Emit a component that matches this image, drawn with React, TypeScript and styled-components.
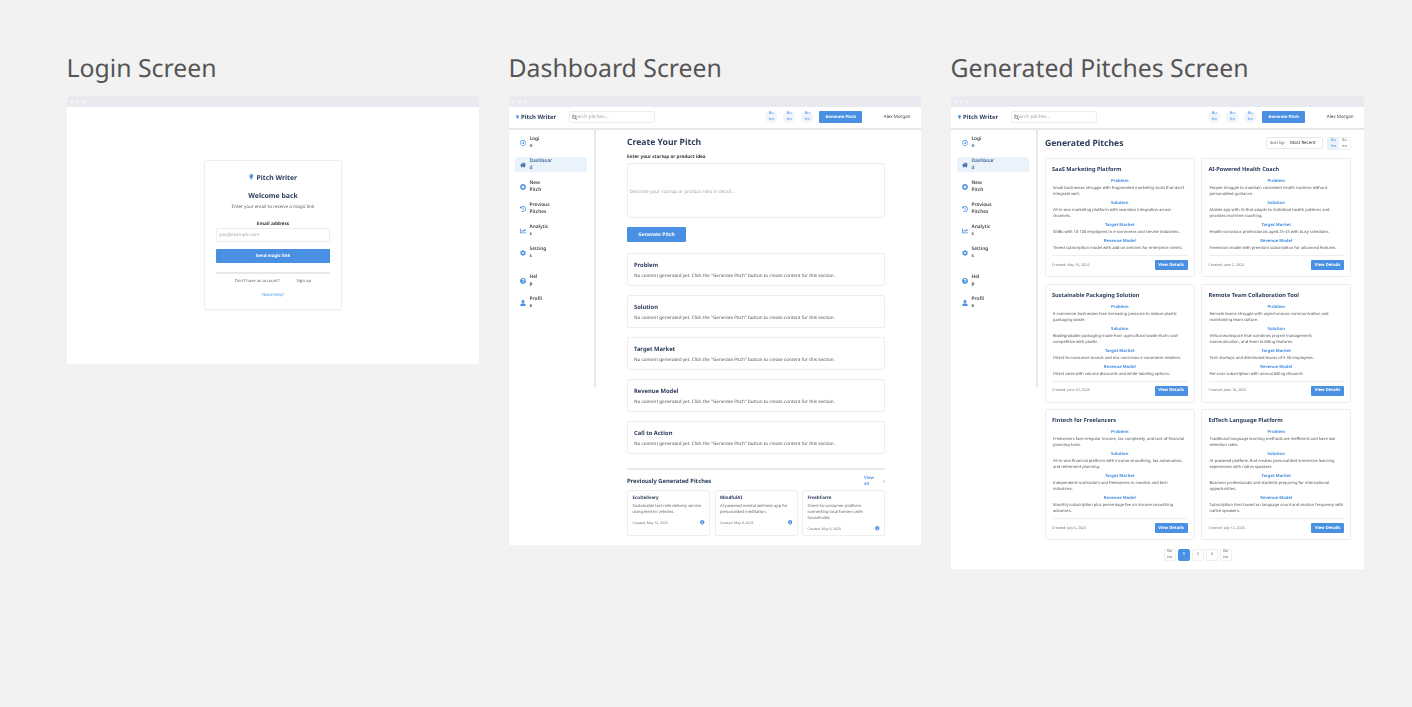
import React from "react";
import styled, { createGlobalStyle } from "styled-components";
import {
  FaChartLine,
  FaChevronRight,
  FaCog,
  FaHistory,
  FaHome,
  FaInfoCircle,
  FaLightbulb,
  FaPlusCircle,
  FaQuestionCircle,
  FaRegArrowAltCircleRight,
  FaSearch,
  FaUser,
} from "react-icons/fa";

const BLUE = "#4a90e2";
const NAVY = "#2c3e5c";

const GlobalStyle = createGlobalStyle`
  html, body {
    margin: 0;
    background: #f2f2f3;
    font-family: "Noto Sans", "Open Sans", sans-serif;
    text-rendering: geometricPrecision;
  }
  * { box-sizing: border-box; }
`;

const Page = styled.div`
  display: grid;
  grid-template-columns: 412px 412px 413px;
  column-gap: 30px;
  align-items: start;
  padding: 52px 0 0 67px;
  width: 1412px;
  height: 707px;
  overflow: hidden;
`;

const ScreenTitle = styled.h2`
  margin: 0 0 12px -0.5px;
  font-size: 24.8px;
  line-height: 32px;
  font-weight: 400;
  color: #555;
`;

const Frame = styled.div`
  background: #fff;
  border-radius: 3px 3px 0 0;
  overflow: hidden;
  filter: blur(0.25px);
`;

const FrameBar = styled.div`
  display: flex;
  align-items: center;
  gap: 3px;
  height: 11px;
  padding-left: 3px;
  background: #e9eaf0;
`;

const FrameDot = styled.span`
  width: 3px;
  height: 3px;
  border-radius: 50%;
  background: #f4f5f8;
`;

const LoginArea = styled.div`
  display: flex;
  align-items: center;
  justify-content: center;
  height: 257px;
  padding-bottom: 1px;
`;

const LoginCard = styled.div`
  display: flex;
  flex-direction: column;
  align-items: center;
  width: 138px;
  height: 150px;
  padding: 11px 11px 0;
  border: 1px solid #eeeeee;
  border-radius: 2px;
  box-shadow: 0 1px 2px rgba(0, 0, 0, 0.03);
`;

const LoginLogo = styled.div`
  display: flex;
  align-items: center;
  gap: 3px;
  height: 10px;
  font-size: 6.8px;
  font-weight: 700;
  color: ${NAVY};
  svg { width: 4.5px; height: 5.5px; color: ${BLUE}; }
`;

const Welcome = styled.h3`
  margin: 10px 0 0;
  font-size: 6.9px;
  line-height: 10px;
  font-weight: 700;
  color: ${NAVY};
`;

const Subtitle = styled.p`
  margin: 1px 0 0;
  font-size: 4.5px;
  line-height: 8px;
  color: #666;
`;

const EmailLabel = styled.label`
  margin-top: 10px;
  font-size: 4.7px;
  line-height: 6px;
  font-weight: 700;
  color: #333;
`;

const EmailInput = styled.div`
  display: flex;
  align-items: center;
  width: 100%;
  height: 14px;
  margin-top: 1px;
  padding-left: 2px;
  border: 1px solid #eeeeee;
  border-radius: 2px;
  font-size: 4.55px;
  color: #a4a8ae;
`;

const WideButton = styled.div`
  display: flex;
  align-items: center;
  justify-content: center;
  width: 100%;
  height: 14px;
  margin-top: 7px;
  background: ${BLUE};
  border-radius: 1px;
  font-size: 4.4px;
  font-weight: 700;
  color: #fff;
`;

const LoginRule = styled.div`
  width: 100%;
  height: 2px;
  margin-top: 9px;
  background: #e7e7e7;
`;

const SignupRow = styled.div`
  display: flex;
  justify-content: center;
  gap: 17px;
  margin-top: 5px;
  font-size: 4.1px;
  line-height: 6px;
  color: #666;
`;

const HelpLink = styled.a`
  margin-top: 8px;
  font-size: 4.2px;
  line-height: 6px;
  color: ${BLUE};
`;

const TopBar = styled.div`
  display: flex;
  align-items: center;
  height: 23px;
  padding: 0 10.5px 1px 7px;
  border-bottom: 2px solid #e7e7e7;
`;

const Brand = styled.div`
  display: flex;
  align-items: center;
  gap: 2px;
  width: 53px;
  font-size: 5.9px;
  font-weight: 700;
  color: ${NAVY};
  white-space: nowrap;
  svg { width: 3px; height: 4px; color: ${BLUE}; flex: none; }
`;

const SearchBox = styled.div`
  position: relative;
  display: flex;
  align-items: center;
  width: 86px;
  height: 11.5px;
  padding-left: 2px;
  border: 1px solid #eeeeee;
  border-radius: 2px;
  font-size: 4.8px;
  color: #9a9ea4;
`;

const SearchGlyph = styled(FaSearch)`
  position: absolute;
  left: 1.5px;
  top: 2.5px;
  width: 5px;
  height: 5px;
  color: #8f959c;
`;

const TopActions = styled.div`
  display: flex;
  align-items: center;
  gap: 6px;
  margin-left: auto;
`;

const RoundButton = styled.div`
  width: 12px;
  height: 12px;
  border-radius: 50%;
  background: #edf4fc;
  font-size: 3.9px;
  line-height: 6px;
  text-align: center;
  color: ${BLUE};
  white-space: pre-line;
`;

const HeaderCta = styled.div`
  display: flex;
  align-items: center;
  justify-content: center;
  width: 43px;
  height: 11.5px;
  background: ${BLUE};
  border-radius: 1px;
  font-size: 4.1px;
  font-weight: 700;
  color: #fff;
`;

const UserName = styled.span`
  margin-left: 21.5px;
  font-size: 4.5px;
  color: #444;
`;

const Body = styled.div`
  display: flex;
  align-items: flex-start;
`;

const Sidebar = styled.nav`
  flex: none;
  display: flex;
  flex-direction: column;
  width: 87px;
  height: 257px;
  padding: 5px 7px 0 6px;
  border-right: 2px solid #e7e7e7;
`;

const NavItem = styled.div<{ $active?: boolean; $gapTop?: number }>`
  display: flex;
  align-items: center;
  gap: 4px;
  height: 15px;
  margin-top: ${(p) => p.$gapTop ?? 7}px;
  padding-left: 4.5px;
  border-radius: 2px;
  background: ${(p) => (p.$active ? "#eaf3fc" : "transparent")};
  font-size: 4.8px;
  line-height: 7px;
  font-weight: 600;
  color: ${(p) => (p.$active ? "#3f6596" : "#3d4149")};
  white-space: pre-line;
  svg {
    width: 6px;
    height: 6px;
    color: ${(p) => (p.$active ? "#2f5f9e" : BLUE)};
    flex: none;
  }
`;

const DashboardMain = styled.main`
  flex: 1;
  min-width: 0;
  padding: 6px 36px 8.5px 31px;
`;

const MainTitle = styled.h1`
  margin: 0;
  font-size: 8.6px;
  line-height: 12px;
  font-weight: 700;
  color: ${NAVY};
`;

const FieldLabel = styled.div`
  margin-top: 6px;
  font-size: 4.6px;
  line-height: 6px;
  font-weight: 700;
  color: #333;
`;

const IdeaBox = styled.div`
  display: flex;
  align-items: center;
  height: 55px;
  margin-top: 3px;
  padding: 3px 0 0 1.5px;
  border: 1px solid #eeeeee;
  border-radius: 2px;
  font-size: 4.7px;
  color: #a4a8ae;
`;

const GenerateButton = styled.div`
  display: flex;
  align-items: center;
  justify-content: center;
  width: 59px;
  height: 15px;
  margin-top: 9px;
  background: ${BLUE};
  border-radius: 1px;
  font-size: 4.95px;
  font-weight: 700;
  color: #fff;
`;

const SectionList = styled.div`
  display: flex;
  flex-direction: column;
  gap: 9px;
  margin-top: 11px;
`;

const SectionCard = styled.section`
  height: 33px;
  padding: 7px 6px 0;
  border: 1px solid #eeeeee;
  border-radius: 2px;
`;

const SectionTitle = styled.h4`
  margin: 0;
  font-size: 5.8px;
  line-height: 8px;
  font-weight: 700;
  color: ${NAVY};
`;

const SectionEmpty = styled.p`
  margin: 4px 0 0;
  font-size: 4.6px;
  line-height: 6px;
  color: #555;
`;

const Rule = styled.div`
  height: 2px;
  margin-top: 14px;
  background: #e7e7e7;
`;

const PreviousHead = styled.div`
  display: flex;
  align-items: center;
  height: 12px;
  margin-top: 5px;
`;

const PreviousTitle = styled.h3`
  margin: 0;
  font-size: 5.8px;
  font-weight: 700;
  color: ${NAVY};
`;

const ViewAll = styled.a`
  margin-left: auto;
  width: 18.5px;
  font-size: 4.4px;
  line-height: 6px;
  font-weight: 600;
  color: ${BLUE};
  white-space: pre-line;
`;

const ViewAllChevron = styled(FaChevronRight)`
  width: 2.5px;
  height: 3px;
  color: #777;
`;

const MiniGrid = styled.div`
  display: grid;
  grid-template-columns: repeat(3, 1fr);
  gap: 4.5px;
  margin-top: 3px;
`;

const MiniCard = styled.article`
  padding: 4px 4.5px 3.5px;
  border: 1px solid #eeeeee;
  border-radius: 2px;
`;

const MiniTitle = styled.h5`
  margin: 0;
  font-size: 4.5px;
  line-height: 6px;
  font-weight: 700;
  color: ${NAVY};
`;

const MiniText = styled.p`
  margin: 2.7px 0 0;
  font-size: 4px;
  line-height: 6px;
  color: #666;
`;

const MiniFooter = styled.div`
  display: flex;
  align-items: center;
  justify-content: space-between;
  height: 6px;
  margin-top: 4px;
  font-size: 3.4px;
  color: #777;
  svg { width: 4.5px; height: 4.5px; color: ${BLUE}; }
`;

const PitchesMain = styled.main`
  flex: 1;
  min-width: 0;
  padding: 6px 13px 8px 6.5px;
`;

const PitchesHead = styled.div`
  display: flex;
  align-items: center;
  height: 14px;
  padding-left: 0.5px;
`;

const SortBox = styled.div`
  display: flex;
  align-items: center;
  width: 57px;
  height: 12px;
  margin-left: auto;
  padding-left: 3px;
  border: 1px solid #e8e8e8;
  border-radius: 2px;
  font-size: 4.2px;
  color: #555;
  white-space: nowrap;
  overflow: hidden;
`;

const SortValue = styled.span`
  margin-left: 5px;
  font-size: 4.4px;
  color: #333;
`;

const ViewToggle = styled.div`
  display: flex;
  width: 24px;
  height: 13px;
  margin-left: 4px;
  border: 1px solid #eeeeee;
  border-radius: 2px;
`;

const ToggleCell = styled.div<{ $on?: boolean }>`
  flex: 1;
  background: ${(p) => (p.$on ? "#eaf3fc" : "#fff")};
  font-size: 3.9px;
  line-height: 6px;
  text-align: center;
  color: ${(p) => (p.$on ? BLUE : "#777")};
  white-space: pre-line;
`;

const PitchGrid = styled.div`
  display: grid;
  grid-template-columns: repeat(2, 150px);
  justify-content: space-between;
  row-gap: 6.5px;
  margin-top: 8px;
`;

const PitchCard = styled.article`
  display: flex;
  flex-direction: column;
  padding: 5px 6px 6px 6.5px;
  border: 1px solid #eeeeee;
  border-radius: 2px;
`;

const PitchTitle = styled.h3`
  margin: 0 0 5px;
  font-size: 5.6px;
  line-height: 10px;
  font-weight: 700;
  color: ${NAVY};
`;

const BlockLabel = styled.div`
  font-size: 4.2px;
  line-height: 6px;
  font-weight: 700;
  text-align: center;
  color: ${BLUE};
`;

const BlockText = styled.p`
  margin: 1px 0 3px;
  padding: 0 0.7px 0 1px;
  font-size: 4px;
  line-height: 6px;
  color: #555;
`;

const PitchFooter = styled.div`
  display: flex;
  align-items: center;
  justify-content: space-between;
  padding-top: 4px;
  border-top: 1.5px solid #eeeeee;
  font-size: 3.6px;
  color: #777;
`;

const DetailsButton = styled.div`
  display: flex;
  align-items: center;
  justify-content: center;
  width: 33px;
  height: 10px;
  background: ${BLUE};
  border-radius: 1px;
  font-size: 4.2px;
  font-weight: 700;
  color: #fff;
`;

const Pager = styled.div`
  display: flex;
  justify-content: center;
  gap: 2px;
  margin-top: 8.5px;
`;

const PageCell = styled.div<{ $on?: boolean }>`
  display: flex;
  align-items: center;
  justify-content: center;
  width: 12px;
  height: 12px;
  border: 1px solid ${(p) => (p.$on ? BLUE : "#eeeeee")};
  border-radius: 2px;
  background: ${(p) => (p.$on ? BLUE : "#fff")};
  font-size: 3.9px;
  line-height: 6px;
  font-weight: ${(p) => (p.$on ? 700 : 400)};
  text-align: center;
  color: ${(p) => (p.$on ? "#fff" : "#666")};
  white-space: pre-line;
`;

const navItems = [
  { label: "Logi\nn", icon: <FaRegArrowAltCircleRight />, top: 0 },
  { label: "Dashboar\nd", icon: <FaHome />, active: true },
  { label: "New\nPitch", icon: <FaPlusCircle /> },
  { label: "Previous\nPitches", icon: <FaHistory /> },
  { label: "Analytic\ns", icon: <FaChartLine /> },
  { label: "Setting\ns", icon: <FaCog /> },
  { label: "Hel\np", icon: <FaQuestionCircle />, top: 13.5 },
  { label: "Profil\ne", icon: <FaUser /> },
];

const sections = ["Problem", "Solution", "Target Market", "Revenue Model", "Call to Action"];

const recent = [
  { name: "EcoDelivery", text: "Sustainable last-mile delivery service using electric vehicles.", date: "Created: May 12, 2025" },
  { name: "MindfulAI", text: "AI-powered mental wellness app for personalized meditation.", date: "Created: May 8, 2025" },
  { name: "FreshFarm", text: "Direct-to-consumer platform connecting local farmers with households.", date: "Created: May 5, 2025" },
];

const pitches = [
  {
    title: "SaaS Marketing Platform",
    date: "Created: May 15, 2025",
    blocks: [
      "Small businesses struggle with fragmented marketing tools that don't integrate well.",
      "All-in-one marketing platform with seamless integration across channels.",
      "SMBs with 10-100 employees in e-commerce and service industries.",
      "Tiered subscription model with add-on services for enterprise clients.",
    ],
  },
  {
    title: "AI-Powered Health Coach",
    date: "Created: June 2, 2025",
    blocks: [
      "People struggle to maintain consistent health routines without personalized guidance.",
      "Mobile app with AI that adapts to individual health patterns and provides real-time coaching.",
      "Health-conscious professionals aged 25-45 with busy schedules.",
      "Freemium model with premium subscription for advanced features.",
    ],
  },
  {
    title: "Sustainable Packaging Solution",
    date: "Created: June 10, 2025",
    blocks: [
      "E-commerce businesses face increasing pressure to reduce plastic packaging waste.",
      "Biodegradable packaging made from agricultural waste that's cost-competitive with plastic.",
      "Direct-to-consumer brands and eco-conscious e-commerce retailers.",
      "Direct sales with volume discounts and white-labeling options.",
    ],
  },
  {
    title: "Remote Team Collaboration Tool",
    date: "Created: June 18, 2025",
    blocks: [
      "Remote teams struggle with asynchronous communication and maintaining team culture.",
      "Virtual workspace that combines project management, communication, and team building features.",
      "Tech startups and distributed teams of 5-50 employees.",
      "Per-user subscription with annual billing discount.",
    ],
  },
  {
    title: "Fintech for Freelancers",
    date: "Created: July 5, 2025",
    blocks: [
      "Freelancers face irregular income, tax complexity, and lack of financial planning tools.",
      "All-in-one financial platform with income smoothing, tax automation, and retirement planning.",
      "Independent contractors and freelancers in creative and tech industries.",
      "Monthly subscription plus percentage fee on income smoothing advances.",
    ],
  },
  {
    title: "EdTech Language Platform",
    date: "Created: July 12, 2025",
    blocks: [
      "Traditional language learning methods are inefficient and have low retention rates.",
      "AI-powered platform that creates personalized immersive learning experiences with native speakers.",
      "Business professionals and students preparing for international opportunities.",
      "Subscription tiers based on language count and session frequency with native speakers.",
    ],
  },
];

const blockNames = ["Problem", "Solution", "Target Market", "Revenue Model"];

const WindowBar = () => (
  <FrameBar>
    <FrameDot />
    <FrameDot />
    <FrameDot />
  </FrameBar>
);

const AppHeader = () => (
  <TopBar>
    <Brand>
      <FaLightbulb />
      Pitch Writer
    </Brand>
    <SearchBox>
      <SearchGlyph />
      Search pitches...
    </SearchBox>
    <TopActions>
      <RoundButton>{"Bu\ntto"}</RoundButton>
      <RoundButton>{"Bu\ntto"}</RoundButton>
      <RoundButton>{"Bu\ntto"}</RoundButton>
      <HeaderCta>Generate Pitch</HeaderCta>
    </TopActions>
    <UserName>Alex Morgan</UserName>
  </TopBar>
);

const SideNav = () => (
  <Sidebar>
    {navItems.map((item) => (
      <NavItem key={item.label} $active={item.active} $gapTop={item.top}>
        {item.icon}
        <span>{item.label}</span>
      </NavItem>
    ))}
  </Sidebar>
);

const App = () => (
  <>
    <GlobalStyle />
    <Page>
      <div>
        <ScreenTitle>Login Screen</ScreenTitle>
        <Frame>
          <WindowBar />
          <LoginArea>
            <LoginCard>
              <LoginLogo>
                <FaLightbulb />
                Pitch Writer
              </LoginLogo>
              <Welcome>Welcome back</Welcome>
              <Subtitle>Enter your email to receive a magic link</Subtitle>
              <EmailLabel>Email address</EmailLabel>
              <EmailInput>you@example.com</EmailInput>
              <WideButton>Send magic link</WideButton>
              <LoginRule />
              <SignupRow>
                <span>Don't have an account?</span>
                <span>Sign up</span>
              </SignupRow>
              <HelpLink>Need help?</HelpLink>
            </LoginCard>
          </LoginArea>
        </Frame>
      </div>

      <div>
        <ScreenTitle>Dashboard Screen</ScreenTitle>
        <Frame>
          <WindowBar />
          <AppHeader />
          <Body>
            <SideNav />
            <DashboardMain>
              <MainTitle>Create Your Pitch</MainTitle>
              <FieldLabel>Enter your startup or product idea</FieldLabel>
              <IdeaBox>Describe your startup or product idea in detail...</IdeaBox>
              <GenerateButton>Generate Pitch</GenerateButton>
              <SectionList>
                {sections.map((name) => (
                  <SectionCard key={name}>
                    <SectionTitle>{name}</SectionTitle>
                    <SectionEmpty>
                      No content generated yet. Click the "Generate Pitch" button to create content for this section.
                    </SectionEmpty>
                  </SectionCard>
                ))}
              </SectionList>
              <Rule />
              <PreviousHead>
                <PreviousTitle>Previously Generated Pitches</PreviousTitle>
                <ViewAll>{"View\nall"}</ViewAll>
                <ViewAllChevron />
              </PreviousHead>
              <MiniGrid>
                {recent.map((item) => (
                  <MiniCard key={item.name}>
                    <MiniTitle>{item.name}</MiniTitle>
                    <MiniText>{item.text}</MiniText>
                    <MiniFooter>
                      <span>{item.date}</span>
                      <FaInfoCircle />
                    </MiniFooter>
                  </MiniCard>
                ))}
              </MiniGrid>
            </DashboardMain>
          </Body>
        </Frame>
      </div>

      <div>
        <ScreenTitle>Generated Pitches Screen</ScreenTitle>
        <Frame>
          <WindowBar />
          <AppHeader />
          <Body>
            <SideNav />
            <PitchesMain>
              <PitchesHead>
                <MainTitle>Generated Pitches</MainTitle>
                <SortBox>
                  Sort by:
                  <SortValue>Most Recent</SortValue>
                </SortBox>
                <ViewToggle>
                  <ToggleCell $on>{"Bu\ntto"}</ToggleCell>
                  <ToggleCell>{"Bu\ntto"}</ToggleCell>
                </ViewToggle>
              </PitchesHead>
              <PitchGrid>
                {pitches.map((pitch) => (
                  <PitchCard key={pitch.title}>
                    <PitchTitle>{pitch.title}</PitchTitle>
                    {pitch.blocks.map((text, i) => (
                      <div key={blockNames[i]}>
                        <BlockLabel>{blockNames[i]}</BlockLabel>
                        <BlockText>{text}</BlockText>
                      </div>
                    ))}
                    <PitchFooter>
                      <span>{pitch.date}</span>
                      <DetailsButton>View Details</DetailsButton>
                    </PitchFooter>
                  </PitchCard>
                ))}
              </PitchGrid>
              <Pager>
                <PageCell>{"Bu\ntto"}</PageCell>
                <PageCell $on>1</PageCell>
                <PageCell>2</PageCell>
                <PageCell>3</PageCell>
                <PageCell>{"Bu\ntto"}</PageCell>
              </Pager>
            </PitchesMain>
          </Body>
        </Frame>
      </div>
    </Page>
  </>
);

export default App;
